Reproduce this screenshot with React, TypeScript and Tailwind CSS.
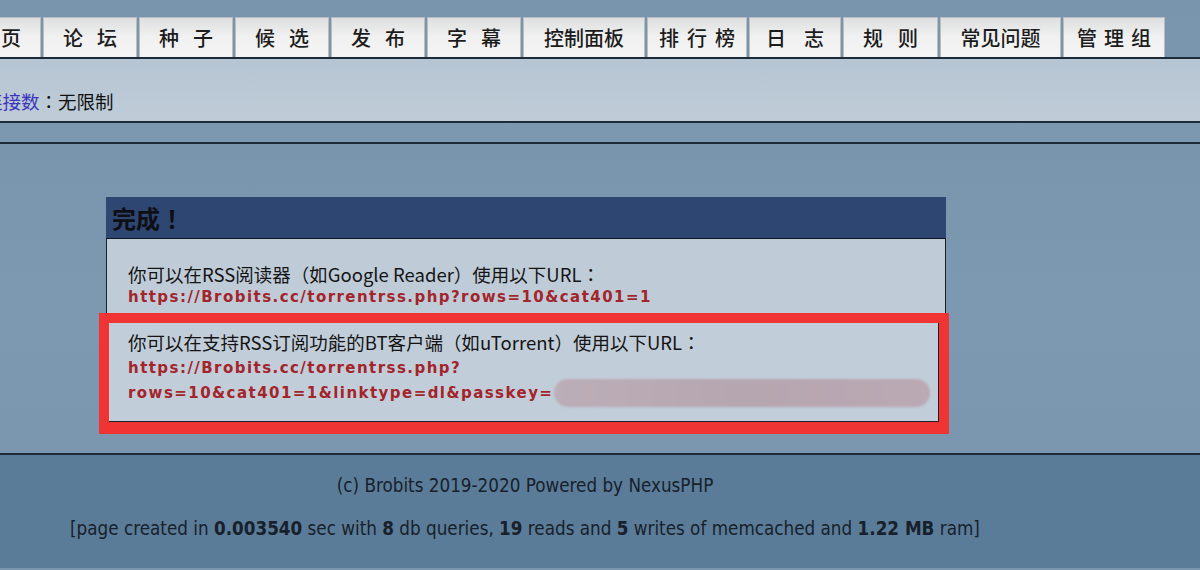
const tabs = [
  { label: "首页", w: "w-[94px]", gap: "gap-[14px]" },
  { label: "论坛", w: "w-[94px]", gap: "gap-[14px]" },
  { label: "种子", w: "w-[94px]", gap: "gap-[14px]" },
  { label: "候选", w: "w-[94px]", gap: "gap-[14px]" },
  { label: "发布", w: "w-[94px]", gap: "gap-[14px]" },
  { label: "字幕", w: "w-[94px]", gap: "gap-[14px]" },
  { label: "控制面板", w: "w-[122px]", gap: "gap-0" },
  { label: "排行榜", w: "w-[100px]", gap: "gap-[8px]" },
  { label: "日志", w: "w-[92px]", gap: "gap-[18px]" },
  { label: "规则", w: "w-[95px]", gap: "gap-[15px]" },
  { label: "常见问题", w: "w-[121px]", gap: "gap-0" },
  { label: "管理组", w: "w-[102px]", gap: "gap-[7px]" },
];

const cjk = "font-['Noto_Sans_CJK_SC','Noto_Sans',sans-serif]";
// TC variant centres full-width punctuation like the original page does
const cjkTc = "font-['Noto_Sans_CJK_TC','Noto_Sans_CJK_SC',sans-serif]";
const url =
  "font-['DejaVu_Sans','Liberation_Sans',sans-serif] font-bold text-[15px] tracking-[1.45px] text-[#a3242a]";

export default function App() {
  return (
    <div className={`w-[1200px] h-[570px] overflow-hidden bg-[#7a96ae] ${cjk}`}>
      {/* top strip */}
      <div className="h-[17px] bg-[#7895ad]" />

      {/* main menu */}
      <nav className="flex gap-[2px] h-[40px] -ml-[53px]">
        {tabs.map((t) => (
          <div
            key={t.label}
            className={`${t.w} shrink-0 flex items-center justify-center border border-b-0 border-[#b9bcc0] bg-gradient-to-b from-[#dedfe0] via-[#f1f1f1] to-[#f4f4f4] text-[20px] leading-none text-[#1c1c1c] font-medium`}
          >
            <span className={`flex ${t.gap}`}>
              {Array.from(t.label).map((c, i) => (
                <span key={i}>{c}</span>
              ))}
            </span>
          </div>
        ))}
      </nav>

      {/* info bar */}
      <div className="h-[66px] border-t-2 border-b-2 border-[#1d2a38] bg-gradient-to-b from-[#b6c5d3] to-[#bfccd8] flex items-end pb-[8px]">
        <p className={`-ml-[16px] text-[18.5px] leading-[24px] text-[#111] ${cjkTc}`}>
          <span className="text-[#3a34bc]">连接数</span>：无限制
        </p>
      </div>
      <div className="h-[21px] border-b-2 border-[#1d2a38] bg-[#7c98b0]" />

      {/* content */}
      <main className="h-[309px] bg-gradient-to-b from-[#7995ad] via-[#7d99b1] to-[#7b97af] pt-[53px]">
        <div className="relative ml-[106px] w-[840px]">
          <div className="h-[42px] bg-[#2d4672] border-b border-[#10161f] flex items-center pl-[6px]">
            <h2 className={`text-[24px] font-bold text-[#0d0f14] leading-none ${cjkTc}`}>完成！</h2>
          </div>
          <div className={`border-x border-b border-[#1a1f26] bg-[#bfccd8] text-[18.5px] text-[#141414] ${cjkTc}`}>
            <div className="pt-[24px] pb-[7px] pl-[21px] leading-[23px]">
              <p>你可以在RSS阅读器（如Google Reader）使用以下URL：</p>
              <p className={url}>https://Brobits.cc/torrentrss.php?rows=10&amp;cat401=1</p>
            </div>
            <div className="pt-[15px] pb-[20px] pl-[21px] leading-[23px] bg-[#c1cdd9]">
              <p>你可以在支持RSS订阅功能的BT客户端（如uTorrent）使用以下URL：</p>
              <p className={`${url} mt-[3px]`}>https://Brobits.cc/torrentrss.php?</p>
              <p className={`${url} flex items-center -mt-[1px]`}>
                rows=10&amp;cat401=1&amp;linktype=dl&amp;passkey=
                <span className="ml-[1px] inline-block h-[28px] w-[376px] rounded-full bg-gradient-to-r from-[#bcaeb8] via-[#b6a6b0] to-[#bba9b4] blur-[1px]" />
              </p>
            </div>
          </div>

          {/* red highlight */}
          <div className="absolute left-[-7px] top-[116px] w-[850px] h-[121px] border-[10px] border-b-[12px] border-[#f03434]">
            <div className="absolute inset-0 border-r border-b border-[#1c2026]" />
          </div>
        </div>
      </main>

      {/* footer */}
      <footer className="h-[115px] border-t-2 border-[#1d2a38] bg-[#5a7c98] font-['Liberation_Sans_Narrow','DejaVu_Sans_Condensed','Liberation_Sans',sans-serif] text-[#18212b] text-[18.7px]">
        <div className="w-[1050px] text-center pt-[19px] leading-[24px]">
          <p>(c) Brobits 2019-2020 Powered by NexusPHP</p>
          <p className="mt-[19px]">
            [page created in <b>0.003540</b> sec with <b>8</b> db queries, <b>19</b> reads and <b>5</b> writes of memcached and <b>1.22 MB</b> ram]
          </p>
        </div>
      </footer>
    </div>
  );
}
